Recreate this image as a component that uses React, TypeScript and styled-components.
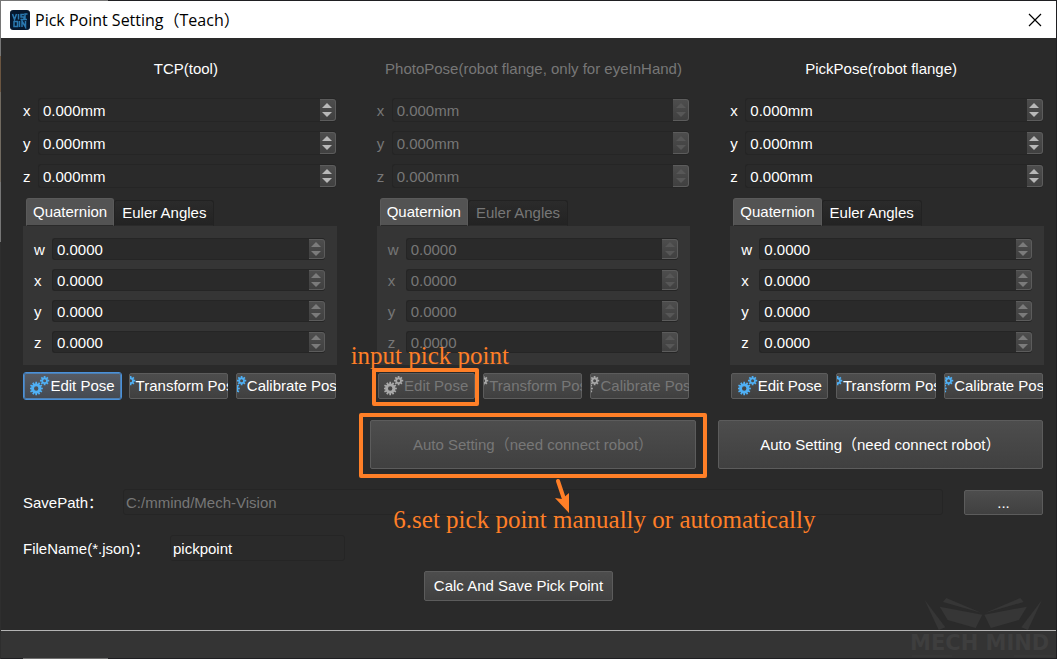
import React, { useId, useState } from "react";
import styled, { createGlobalStyle, css } from "styled-components";

const UI_FONT = `"Liberation Sans", "Noto Sans CJK SC", sans-serif`;
const ORANGE = "#ff7f27";

const GlobalStyle = createGlobalStyle`
  *, *::before, *::after { box-sizing: border-box; }
  body { margin: 0; background: #2a2a2a; }
  button, input { font: inherit; color: inherit; margin: 0; }
  h1, h2, p { margin: 0; font: inherit; }
`;

const Dialog = styled.div`
  display: flex;
  flex-direction: column;
  min-height: 100vh;
  min-width: 900px;
  padding: 1px;
  background:
    linear-gradient(#767676 56px, #6b5540 56px 92px, #716a60 92px 182px, #767676 182px 242px, #2e2e2e 242px)
      left top / 1px 100% no-repeat,
    linear-gradient(90deg, #767676 108px, #1f1f22 108px) left top / 100% 1px no-repeat,
    linear-gradient(#1f1f22, #1f1f22) right top / 1px 100% no-repeat,
    linear-gradient(90deg, #1f1f22 23px, #6e6e6e 23px 108px, #1f1f22 108px) left bottom / 100% 1px no-repeat,
    #2a2a2a;
  color: #fff;
  font: 15px/18px ${UI_FONT};
`;

const TitleBar = styled.header`
  display: flex;
  align-items: center;
  height: 37px;
  padding: 0 13px 0 9px;
  gap: 5px;
  background: #fff;
  color: #000;
`;

const Title = styled.h1`
  flex: 1;
  font: 16px/20px "Open Sans", "Noto Sans CJK SC", sans-serif;
`;

const CloseButton = styled.button`
  display: flex;
  padding: 0;
  border: 0;
  background: none;
`;

const Content = styled.main`
  flex: 1;
  padding: 22px 12px 0 22px;
`;

const Headings = styled.div`
  display: grid;
  grid-template-columns: repeat(3, minmax(0, 1fr));
  column-gap: 22px;
  margin-bottom: 20px;
`;

const Heading = styled.h2<{ $disabled?: boolean }>`
  color: ${(p) => (p.$disabled ? "#777" : "#fff")};
  text-align: center;
`;

const Columns = styled.div`
  display: grid;
  grid-template-columns: repeat(3, minmax(0, 1fr));
  column-gap: 40px;
`;

const Panel = styled.section<{ $disabled?: boolean }>`
  color: ${(p) => (p.$disabled ? "#777" : "#fff")};
`;

const PositionRows = styled.div`
  display: grid;
  row-gap: 9px;
  padding-right: 1px;
`;

const RotationRows = styled.div`
  display: grid;
  row-gap: 9px;
  padding: 12px 12px 12px 11px;
  background: #353535;
`;

const Row = styled.div<{ $label: number }>`
  display: grid;
  grid-template-columns: ${(p) => p.$label}px minmax(0, 1fr);
  align-items: center;
`;

const AxisLabel = styled.label`
  padding-top: 2px;
`;

const SpinBox = styled.div<{ $tall?: boolean }>`
  display: flex;
  height: ${(p) => (p.$tall ? 24 : 22)}px;
  border: 1px solid #252525;
  border-right: 0;
  border-radius: 3px;
  background: #2a2a2a;
`;

const SpinInput = styled.input`
  flex: 1;
  min-width: 0;
  padding: 2px 4px 0;
  border: 0;
  outline: 0;
  background: none;
`;

const Stepper = styled.div<{ $arrow: string }>`
  display: flex;
  flex-direction: column;
  width: 16px;
  border: 1px solid #5c5c5c;
  border-left: 0;
  border-radius: 0 3px 3px 0;
  background: linear-gradient(#4d4d4d, #404040);
  color: ${(p) => p.$arrow};
`;

const StepButton = styled.button<{ $up?: boolean }>`
  display: flex;
  flex: 1;
  align-items: ${(p) => (p.$up ? "flex-end" : "flex-start")};
  justify-content: center;
  padding: 2px 0;
  border: 0;
  background: none;
`;

const Tabs = styled.div`
  display: flex;
  align-items: flex-end;
  height: 38px;
  padding-left: 3px;
`;

const Tab = styled.button<{ $active?: boolean }>`
  height: ${(p) => (p.$active ? 28 : 26)}px;
  padding: 0 ${(p) => (p.$active ? 6 : 7)}px;
  border: 1px solid ${(p) => (p.$active ? "#5a5a5a" : "#222")};
  border-bottom-color: #2a2a2a;
  border-radius: 3px 3px 0 0;
  background: ${(p) => (p.$active ? "#535353" : "linear-gradient(#2b2b2b, #232323)")};
  ${(p) => p.$active && css`color: #fff;`}
`;

const PoseButtons = styled.div`
  display: flex;
  gap: 8px;
  padding: 8px 1px 0 1px;
`;

const buttonFace = css`
  border: 1px solid #5c5c5c;
  border-radius: 2px;
  background: linear-gradient(#4d4d4d, #404040);
`;

const PoseButton = styled.button<{ $focused?: boolean; $fixed?: boolean }>`
  ${buttonFace}
  position: relative;
  display: flex;
  flex: ${(p) => (p.$fixed ? "0 0 97px" : "1 1 0")};
  min-width: 0;
  height: 26px;
  align-items: center;
  padding: 0;
  white-space: nowrap;
  ${(p) =>
    p.$focused &&
    css`
      outline: 1px solid #4a90d9;
      border-color: #4f7fb0;
      background: linear-gradient(#565b64, #454a52);
    `}
`;

const ButtonClip = styled.span`
  display: flex;
  flex: 1;
  min-width: 0;
  height: 24px;
  margin-right: -1px;
  padding-right: 1px;
  align-items: center;
  justify-content: center;
  overflow: hidden;

  & > * { flex: none; }
`;

const AutoRow = styled.div`
  display: grid;
  grid-template-columns: repeat(3, minmax(0, 1fr));
  column-gap: 22px;
  margin-top: 21px;
  padding-right: 1px;
`;

const AutoCell = styled.div<{ $column: number }>`
  position: relative;
  grid-column: ${(p) => p.$column};
`;

const AutoButton = styled.button`
  ${buttonFace}
  width: 100%;
  height: 49px;
  &:disabled { color: #777; }
`;

const FieldRow = styled.div<{ $label: number }>`
  display: grid;
  grid-template-columns: ${(p) => p.$label}px minmax(0, 1fr) auto;
  align-items: center;
  margin-top: 20px;
  padding-right: 1px;
`;

const FieldLabel = styled.label`
  padding-top: 2px;
`;

const TextField = styled.input<{ $short?: boolean }>`
  width: ${(p) => (p.$short ? "175px" : "100%")};
  height: 26px;
  padding: 0 2px;
  border: 1px solid #252525;
  border-radius: 3px;
  outline: 0;
  background: #2a2a2a;
  &:disabled { color: #777; }
`;

const BrowseButton = styled.button`
  ${buttonFace}
  width: 79px;
  height: 25px;
  margin-left: 21px;
  padding: 2px 0 0;
`;

const SaveRow = styled.div`
  display: flex;
  justify-content: center;
  margin-top: 10px;
  padding-right: 30px;
`;

const SaveButton = styled.button`
  ${buttonFace}
  height: 30px;
  padding: 0 9px;
`;

const Footer = styled.footer`
  position: relative;
  height: 28px;
  border-top: 1px solid #b4b4b4;
  background: #343434;
`;

const Watermark = styled.svg`
  position: absolute;
  right: 0;
  bottom: 0;
`;

const Highlight = styled.span`
  position: absolute;
  border: 4px solid ${ORANGE};
  border-radius: 2px;
  pointer-events: none;
`;

const EditHighlight = styled(Highlight)`
  inset: -6px -5px -8px -7px;
`;

const AutoHighlight = styled(Highlight)`
  inset: -7px -11px -9px -11px;
`;

const Note = styled.p`
  position: absolute;
  color: ${ORANGE};
  font: 25px/28px "Liberation Serif", serif;
  white-space: nowrap;
  pointer-events: none;
`;

const InputNote = styled(Note)`
  left: -28px;
  top: -32px;
`;

const AutoNote = styled(Note)`
  left: 23px;
  top: 86px;
`;

const Arrow = styled.svg`
  position: absolute;
  left: 183px;
  top: 57px;
`;

function gear(cx: number, cy: number, outer: number, inner: number, hole: number, teeth: number) {
  const step = (Math.PI * 2) / teeth;
  const at = (r: number, a: number) =>
    `${(cx + r * Math.cos(a)).toFixed(2)} ${(cy + r * Math.sin(a)).toFixed(2)}`;
  let d = "";
  for (let i = 0; i < teeth; i++) {
    const a = i * step - Math.PI / 2;
    d += `${i ? "L" : "M"}${at(inner, a - step * 0.34)}L${at(outer, a - step * 0.24)}`;
    d += `L${at(outer, a + step * 0.24)}L${at(inner, a + step * 0.34)}`;
  }
  return `${d}ZM${cx - hole} ${cy}a${hole} ${hole} 0 1 0 ${hole * 2} 0a${hole} ${hole} 0 1 0 ${-hole * 2} 0Z`;
}

function GearsIcon({ color }: { color: string }) {
  return (
    <svg width="20" height="20" viewBox="0 0 20 20" fill={color} fillRule="evenodd" aria-hidden>
      <path d={gear(6.2, 12.5, 6.7, 5, 2.2, 12)} />
      <path d={gear(14.6, 4.7, 4.7, 3.3, 1.5, 8)} />
    </svg>
  );
}

function AppIcon() {
  return (
    <svg width="20" height="20" viewBox="0 0 20 20" aria-hidden>
      <rect width="20" height="20" rx="3" fill="#06182f" />
      <g fill="none" stroke="#2a78b0" strokeWidth="1.5">
        <path d="M2.500 4l2 5.500 2-5.500M8.500 4v5.500M14 4.500h-3v2.500h3v2.500h-3.500M17.500 4h-2.500v5.500h2" />
        <path d="M4 11.500h3.500v5h-3.500zM9.500 11v6M12 17v-6l3.500 6v-6" />
      </g>
    </svg>
  );
}

const Triangle = ({ down }: { down?: boolean }) => (
  <svg width="10" height="5" viewBox="0 0 10 5" fill="currentColor" aria-hidden>
    <path d={down ? "M0 0h10L5 5z" : "M0 5h10L5 0z"} />
  </svg>
);

interface SpinProps {
  axis: string;
  initial: string;
  disabled?: boolean;
  rotation?: boolean;
}

function SpinRow({ axis, initial, disabled, rotation }: SpinProps) {
  const id = useId();
  const [value, setValue] = useState(initial);
  const arrow = disabled ? "#575757" : rotation ? "#7b7b7b" : "#b8b8b8";
  const step = (delta: number) => {
    const next = parseFloat(value) + delta;
    setValue(rotation ? next.toFixed(4) : `${next.toFixed(3)}mm`);
  };
  return (
    <Row $label={rotation ? 18 : 15}>
      <AxisLabel htmlFor={id}>{axis}</AxisLabel>
      <SpinBox $tall={!rotation}>
        <SpinInput id={id} value={value} disabled={disabled} onChange={(e) => setValue(e.target.value)} />
        <Stepper $arrow={arrow}>
          <StepButton $up disabled={disabled} aria-label={`Increase ${axis}`} onClick={() => step(1)}>
            <Triangle />
          </StepButton>
          <StepButton disabled={disabled} aria-label={`Decrease ${axis}`} onClick={() => step(-1)}>
            <Triangle down />
          </StepButton>
        </Stepper>
      </SpinBox>
    </Row>
  );
}

interface PoseProps {
  label: string;
  disabled?: boolean;
  focused?: boolean;
  annotated?: boolean;
}

function PosePanel({ label, disabled, focused, annotated }: PoseProps) {
  const iconColor = disabled ? "#a8a8a8" : "#4fb0f5";
  return (
    <Panel $disabled={disabled} aria-labelledby={label}>
      <PositionRows>
        {["x", "y", "z"].map((axis) => (
          <SpinRow key={axis} axis={axis} initial="0.000mm" disabled={disabled} />
        ))}
      </PositionRows>
      <Tabs role="tablist">
        <Tab $active role="tab" aria-selected disabled={disabled}>Quaternion</Tab>
        <Tab role="tab" aria-selected={false} disabled={disabled}>Euler Angles</Tab>
      </Tabs>
      <RotationRows>
        {["w", "x", "y", "z"].map((axis) => (
          <SpinRow key={axis} axis={axis} initial="0.0000" disabled={disabled} rotation />
        ))}
      </RotationRows>
      <PoseButtons>
        <PoseButton $fixed $focused={focused} disabled={disabled}>
          <ButtonClip><GearsIcon color={iconColor} /><span>Edit Pose</span></ButtonClip>
          {annotated && <EditHighlight />}
          {annotated && <InputNote as="span">input pick point</InputNote>}
        </PoseButton>
        <PoseButton disabled={disabled}>
          <ButtonClip><GearsIcon color={iconColor} /><span>Transform Pose</span></ButtonClip>
        </PoseButton>
        <PoseButton disabled={disabled}>
          <ButtonClip><GearsIcon color={iconColor} /><span>Calibrate Pose</span></ButtonClip>
        </PoseButton>
      </PoseButtons>
    </Panel>
  );
}

export default function App() {
  const [fileName, setFileName] = useState("pickpoint");
  return (
    <>
      <GlobalStyle />
      <Dialog>
        <TitleBar>
          <AppIcon />
          <Title>Pick Point Setting（Teach）</Title>
          <CloseButton aria-label="Close">
            <svg width="16" height="16" viewBox="0 0 16 16" stroke="#000" strokeWidth="1.2" aria-hidden>
              <path d="M2 2l12 12M14 2L2 14" />
            </svg>
          </CloseButton>
        </TitleBar>
        <Content>
          <Headings>
            <Heading id="tcp">TCP(tool)</Heading>
            <Heading id="photo-pose" $disabled>PhotoPose(robot flange, only for eyeInHand)</Heading>
            <Heading id="pick-pose">PickPose(robot flange)</Heading>
          </Headings>
          <Columns>
            <PosePanel label="tcp" focused />
            <PosePanel label="photo-pose" disabled annotated />
            <PosePanel label="pick-pose" />
          </Columns>
          <AutoRow>
            <AutoCell $column={2}>
              <AutoButton disabled>Auto Setting（need connect robot）</AutoButton>
              <AutoHighlight />
              <Arrow width="32" height="40" viewBox="0 0 32 40" aria-hidden>
                <path d="M5 4L11 22" stroke={ORANGE} strokeWidth="4" strokeLinecap="round" />
                <path d="M2 21l7 1 7-6v20z" fill={ORANGE} />
              </Arrow>
              <AutoNote>6.set pick point manually or automatically</AutoNote>
            </AutoCell>
            <AutoCell $column={3}>
              <AutoButton>Auto Setting（need connect robot）</AutoButton>
            </AutoCell>
          </AutoRow>
          <FieldRow $label={100}>
            <FieldLabel htmlFor="save-path">SavePath：</FieldLabel>
            <TextField id="save-path" defaultValue="C:/mmind/Mech-Vision" disabled />
            <BrowseButton aria-label="Browse">...</BrowseButton>
          </FieldRow>
          <FieldRow $label={147}>
            <FieldLabel htmlFor="file-name">FileName(*.json)：</FieldLabel>
            <TextField
              id="file-name"
              $short
              value={fileName}
              onChange={(e) => setFileName(e.target.value)}
            />
          </FieldRow>
          <SaveRow>
            <SaveButton>Calc And Save Pick Point</SaveButton>
          </SaveRow>
        </Content>
        <Footer>
          <Watermark width="146" height="62" viewBox="0 0 146 62" aria-hidden>
            <g fill="#363636">
              <path d="M14.700 4L35.300 31.300L28.700 34z" />
              <path d="M36.300 2L33 6L71 16.700z" />
              <path d="M29.700 10.700L72.300 18.700L65.700 32L37.700 24z" />
              <path d="M131.900 4L111.300 31.300L117.900 34z" />
              <path d="M110.300 2L113.600 6L75.600 16.700z" />
              <path d="M116.900 10.700L74.300 18.700L80.900 32L108.900 24z" />
            </g>
            <text x="0" y="54" fill="#3e3e3e" fontFamily="DejaVu Sans, sans-serif" fontSize="21" fontWeight="700">
              MECH MIND
            </text>
            <path d="M2 60h40M104 60h40" stroke="#3a3a3a" />
          </Watermark>
        </Footer>
      </Dialog>
    </>
  );
}
